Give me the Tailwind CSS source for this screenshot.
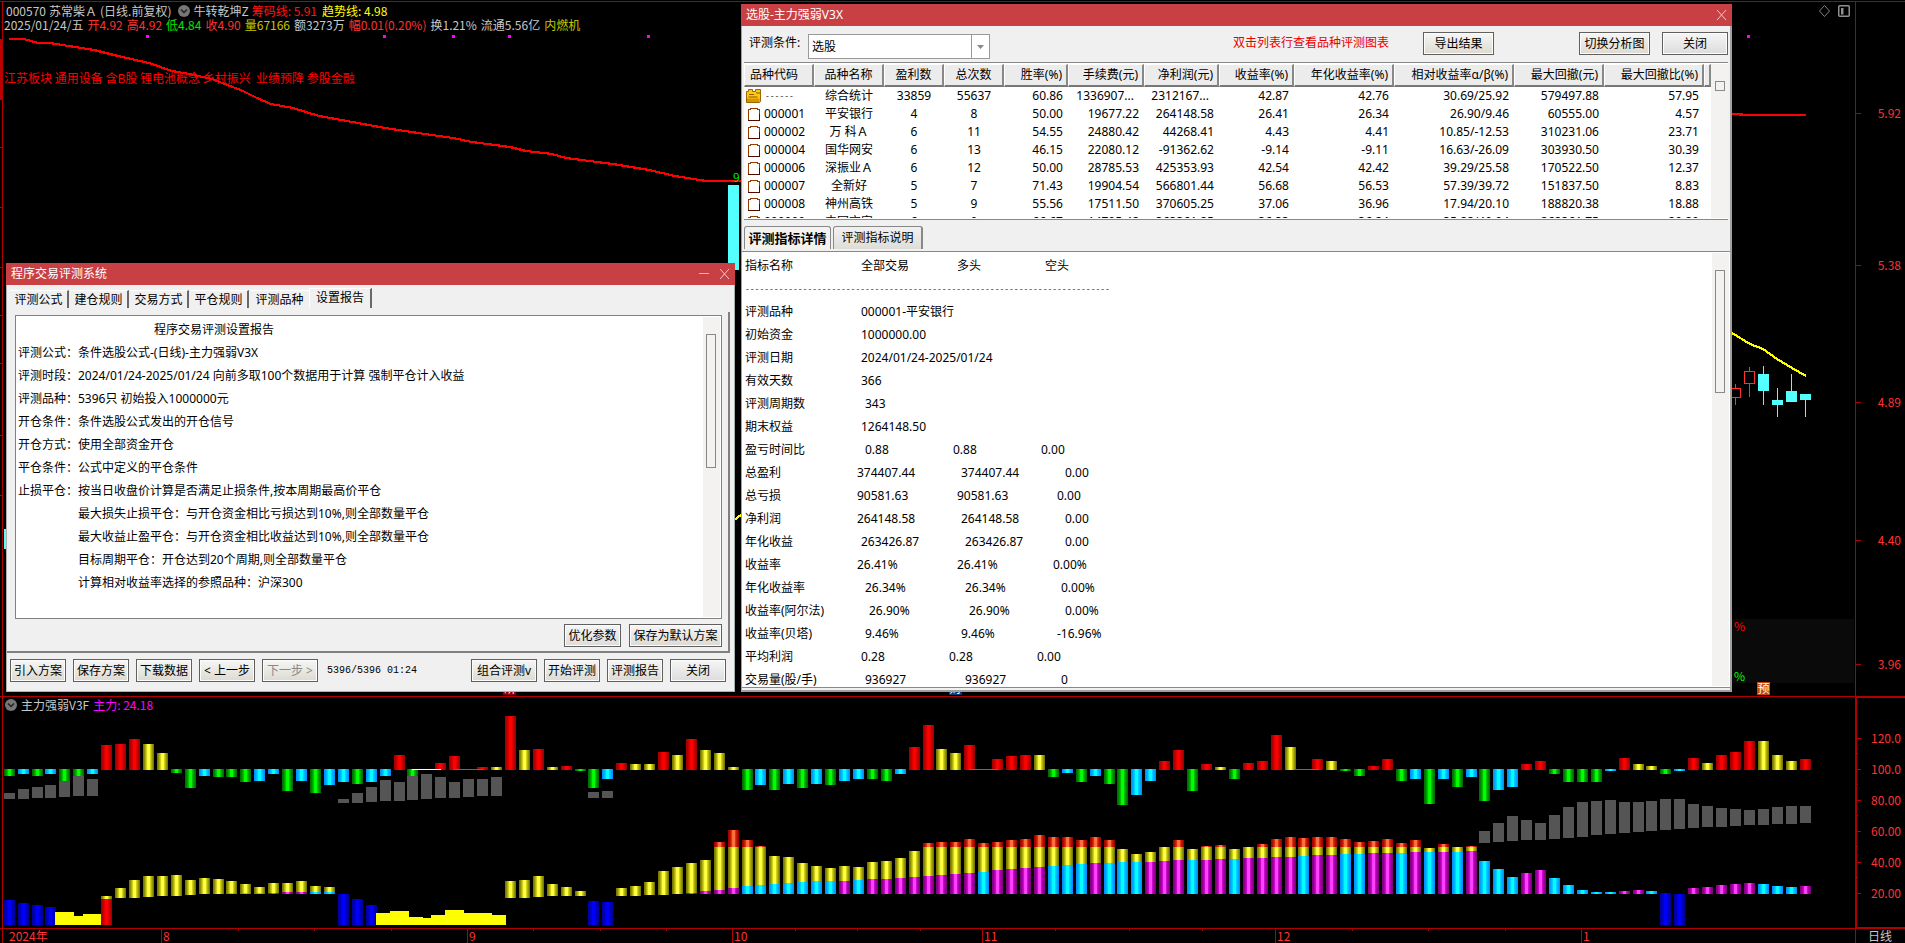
<!DOCTYPE html>
<html lang="zh-CN">
<head>
<meta charset="utf-8">
<title>主力强弱V3X 程序交易评测</title>
<script src="https://cdn.jsdelivr.net/npm/@tailwindcss/browser@4"></script>
</head>
<body class="bg-black text-[12px] leading-[14px] font-['Noto_Sans_CJK_SC',sans-serif] text-[#c8c8c8]">
<div class="relative flex h-screen flex-col overflow-hidden">

  <!-- price chart -->
  <section class="flex min-h-0 flex-1 border-t border-[#b00000] mt-px">
    <div class="relative min-w-0 flex-1">
      <svg id="price" class="block h-full w-full" viewBox="0 2 1855 694" preserveAspectRatio="none" shape-rendering="crispEdges"></svg>
      <div class="absolute left-[4px] top-[2px] flex flex-col whitespace-nowrap">
        <div class="flex items-center gap-[3px] pl-[2px]">
          <span>000570</span><span>苏常柴Ａ</span><span>(日线.前复权)</span>
          <svg class="ml-1 size-3" viewBox="0 0 12 12"><circle cx="6" cy="6" r="6" fill="#777"/><path d="M3 4.500l3 3 3-3" fill="none" stroke="#222" stroke-width="1.500"/></svg>
          <span>牛转乾坤Z</span><span class="text-[#ff1414]">筹码线: 5.91</span><span class="pl-[2px] text-[#ffff00]">趋势线: 4.98</span>
        </div>
        <div class="flex items-center gap-1">
          <span>2025/01/24/五</span><span class="text-[#ff3232]">开4.92</span><span class="text-[#ff3232]">高4.92</span><span class="text-[#00e600]">低4.84</span><span class="text-[#ff3232]">收4.90</span><span class="text-[#c8c800]">量67166</span><span>额3273万</span><span class="text-[#ff3232]">幅0.01(0.20%)</span><span>换1.21%</span><span>流通5.56亿</span><span class="text-[#c8c800]">内燃机</span>
        </div>
      </div>
      <p class="absolute left-[4px] top-[69px] whitespace-pre text-[#ff0000]">江苏板块 通用设备 含B股 锂电池概念 乡村振兴  业绩预降 参股金融</p>
      <div class="absolute right-[5px] top-[3px] flex items-center gap-2">
        <svg class="h-3 w-[11px]" viewBox="0 0 11 12" fill="none" stroke="#808080"><path d="M5.500.5l5 5.500-5 5.500-5-5.500z"/></svg>
        <svg class="size-3" viewBox="0 0 12 12"><rect x=".75" y=".75" width="10.500" height="10.500" rx="1" fill="none" stroke="#909090" stroke-width="1.500"/><rect x="3" y="3" width="2.500" height="6.500" fill="#909090"/></svg>
      </div>
      <span class="absolute left-[733px] top-[168px] text-[#00e600]">9</span>
      <div class="absolute bottom-[13px] left-[1732px] right-px flex h-16 flex-col justify-between bg-[#0a0a0a] px-[2px]">
        <span class="text-[#ff0000]">%</span><span class="text-[#00ff00]">%</span>
      </div>
      <span class="absolute bottom-px left-[1757px] h-[13px] w-[13px] bg-[#c04810] text-center leading-[12px] text-white">预</span>
      <span class="absolute bottom-px left-[503px] h-[13px] w-[13px] bg-[#8c0000] text-center leading-[12px] text-white">研</span>
      <span class="absolute bottom-px left-[949px] h-[13px] w-[13px] bg-[#003c78] text-center leading-[12px] text-white">财</span>
    </div>
    <div id="priceAxis" class="relative w-[50px] border-l border-[#b00000] text-[#ff3232]"></div>
  </section>

  <!-- strength indicator -->
  <section class="flex h-[232px] border-t border-[#b00000]">
    <div class="relative min-w-0 flex-1">
      <svg id="strength" class="block h-full w-full" viewBox="0 697 1855 231" preserveAspectRatio="none" shape-rendering="crispEdges"></svg>
      <div class="absolute left-[5px] top-px flex items-center gap-1 whitespace-nowrap">
        <svg class="size-3" viewBox="0 0 12 12"><circle cx="6" cy="6" r="6" fill="#777"/><path d="M3 4.500l3 3 3-3" fill="none" stroke="#222" stroke-width="1.500"/></svg>
        <span>主力强弱V3F</span><span class="text-[#ff00ff]">主力: 24.18</span>
      </div>
    </div>
    <div id="strengthAxis" class="relative w-[50px] border-b border-l-2 border-t border-[#b00000] text-[#ff3232]"></div>
  </section>

  <!-- time axis -->
  <footer class="flex h-[15px] border-t border-[#b00000]">
    <div id="timeAxis" class="relative min-w-0 flex-1 text-[#ff3232]"></div>
    <div class="w-[50px] border-l border-[#b00000] pl-3">日线</div>
  </footer>

  <!-- window: 程序交易评测系统 -->
  <div class="absolute bottom-[251px] left-[6px] top-[263px] flex w-[729px] flex-col bg-[#f0f0f0] font-['Noto_Sans','Noto_Sans_CJK_SC',sans-serif] text-black">
    <header class="flex h-[22px] shrink-0 items-center justify-between bg-[#c84044] pl-[5px] pr-[5px] text-white">
      <h2>程序交易评测系统</h2>
      <div class="flex items-center gap-[9px]">
        <button aria-label="最小化"><svg class="size-[11px]" viewBox="0 0 11 11" stroke="#e8b0b0"><path d="M0 4.500h10"/></svg></button>
        <button aria-label="关闭窗口"><svg class="size-[11px]" viewBox="0 0 11 11" stroke="#f0c8c8"><path d="M1 0l9 10M10 0L1 10"/></svg></button>
      </div>
    </header>
    <div class="flex min-h-0 flex-1 flex-col border border-t-0 border-[#a8b0b0]">
      <nav class="flex h-[23px] items-end pl-[3px]">
        <button class="mr-px h-[18px] w-[59px] border-r-2 border-t border-[#696969] border-t-white pt-px leading-[16px]">评测公式</button>
        <button class="mr-px h-[18px] w-[59px] border-r-2 border-t border-[#696969] border-t-white pt-px leading-[16px]">建仓规则</button>
        <button class="mr-px h-[18px] w-[59px] border-r-2 border-t border-[#696969] border-t-white pt-px leading-[16px]">交易方式</button>
        <button class="mr-px h-[18px] w-[59px] border-r-2 border-t border-[#696969] border-t-white pt-px leading-[16px]">平仓规则</button>
        <button class="h-[18px] w-[59px] border-t border-white pt-px leading-[16px]">评测品种</button>
        <button class="h-5 w-[63px] border-l border-r-2 border-t border-white border-r-[#696969] pb-[2px] leading-[16px]">设置报告</button>
      </nav>
      <div class="mr-[4px] mt-1 flex min-h-0 flex-1 flex-col border-b-2 border-r-2 border-[#808080] px-2 pb-1 pr-1.5 pt-[3px]">
        <div class="flex min-h-0 flex-1 border border-[#828282] bg-white">
          <div class="min-w-0 flex-1 overflow-hidden whitespace-nowrap pl-[2px] pt-[2px] leading-[23px]">
            <p class="pl-[136px]">程序交易评测设置报告</p>
            <p>评测公式：条件选股公式-(日线)-主力强弱V3X</p>
            <p>评测时段：2024/01/24-2025/01/24 向前多取100个数据用于计算 强制平仓计入收益</p>
            <p>评测品种：5396只 初始投入1000000元</p>
            <p>开仓条件：条件选股公式发出的开仓信号</p>
            <p>开仓方式：使用全部资金开仓</p>
            <p>平仓条件：公式中定义的平仓条件</p>
            <p>止损平仓：按当日收盘价计算是否满足止损条件,按本周期最高价平仓</p>
            <p class="pl-15">最大损失止损平仓：与开仓资金相比亏损达到10%,则全部数量平仓</p>
            <p class="pl-15">最大收益止盈平仓：与开仓资金相比收益达到10%,则全部数量平仓</p>
            <p class="pl-15">目标周期平仓：开仓达到20个周期,则全部数量平仓</p>
            <p class="pl-15">计算相对收益率选择的参照品种：沪深300</p>
          </div>
          <div class="m-px w-[17px] bg-[#f3f2f1] px-[3px] pt-[17px]"><div class="h-[134px] w-[10px] border border-[#888]"></div></div>
        </div>
        <div class="mt-[5px] flex justify-end gap-2">
          <button class="h-[23px] w-[57px] border border-[#606060] bg-linear-to-b from-[#f6f6f6] to-[#dcdcdc] shadow-[inset_0_0_0_1px_#fcfcfc]">优化参数</button>
          <button class="h-[23px] w-[93px] border border-[#606060] bg-linear-to-b from-[#f6f6f6] to-[#dcdad0] shadow-[inset_0_0_0_1px_#fcfcfc]">保存为默认方案</button>
        </div>
      </div>
      <div class="flex h-[38px] items-start gap-[7px] pl-[3px] pr-2 pt-[6px]">
        <button class="h-[23px] w-[56px] border border-[#606060] bg-linear-to-b from-[#f6f6f6] to-[#dcdad0] shadow-[inset_0_0_0_1px_#fcfcfc]">引入方案</button>
        <button class="h-[23px] w-[56px] border border-[#606060] bg-linear-to-b from-[#f6f6f6] to-[#dcdad0] shadow-[inset_0_0_0_1px_#fcfcfc]">保存方案</button>
        <button class="h-[23px] w-[56px] border border-[#606060] bg-linear-to-b from-[#f6f6f6] to-[#dcdad0] shadow-[inset_0_0_0_1px_#fcfcfc]">下载数据</button>
        <button class="h-[23px] w-[56px] border border-[#606060] bg-linear-to-b from-[#f6f6f6] to-[#dcdad0] shadow-[inset_0_0_0_1px_#fcfcfc]">&lt; 上一步</button>
        <button class="h-[23px] w-[56px] border border-[#606060] bg-linear-to-b from-[#f6f6f6] to-[#dcdad0] text-[#888] shadow-[inset_0_0_0_1px_#fcfcfc]" disabled>下一步 &gt;</button>
        <output class="mr-auto pl-[2px] font-['Liberation_Mono',monospace] text-[10px] leading-[23px]">5396/5396 01:24</output>
        <button class="h-[23px] w-[66px] border border-[#606060] bg-linear-to-b from-[#f6f6f6] to-[#dcdad0] shadow-[inset_0_0_0_1px_#fcfcfc]">组合评测v</button>
        <button class="h-[23px] w-[56px] border border-[#606060] bg-linear-to-b from-[#f6f6f6] to-[#dcdad0] shadow-[inset_0_0_0_1px_#fcfcfc]">开始评测</button>
        <button class="h-[23px] w-[56px] border border-[#606060] bg-linear-to-b from-[#f6f6f6] to-[#dcdad0] shadow-[inset_0_0_0_1px_#fcfcfc]">评测报告</button>
        <button class="h-[23px] w-[56px] border border-[#606060] bg-linear-to-b from-[#f6f6f6] to-[#dcdcdc] shadow-[inset_0_0_0_1px_#fcfcfc]">关闭</button>
      </div>
    </div>
  </div>

  <!-- window: 选股 -->
  <div class="absolute bottom-[251px] left-[741px] right-[173px] top-1 flex flex-col bg-[#f0f0f0] font-['Noto_Sans','Noto_Sans_CJK_SC',sans-serif] text-black">
    <header class="flex h-[22px] shrink-0 items-center justify-between bg-[#c84044] pl-[5px] pr-[5px] text-white">
      <h2>选股-主力强弱V3X</h2>
      <button aria-label="关闭窗口"><svg class="size-[11px]" viewBox="0 0 11 11" stroke="#f0c8c8"><path d="M1 0l9 10M10 0L1 10"/></svg></button>
    </header>
    <div class="flex min-h-0 flex-1 flex-col border-b-2 border-l border-r-2 border-[#a0a0a0]">
      <div class="flex h-9 shrink-0 items-start pl-[7px] pr-[2px] pt-1.5">
        <label for="cond" class="w-[59px] leading-[22px]">评测条件:</label>
        <div class="relative mt-[2px]">
          <select id="cond" class="block h-[25px] w-[182px] appearance-none border border-[#999] bg-white pl-[3px]"><option>选股</option></select>
          <span class="pointer-events-none absolute bottom-px right-px top-px flex w-[18px] items-center justify-center border-l border-[#999]"><svg class="h-1 w-[7px]" viewBox="0 0 7 4" fill="#888"><path d="M0 0h7L3.500 4z"/></svg></span>
        </div>
        <span class="ml-auto leading-[22px] text-[#e60000]">双击列表行查看品种评测图表</span>
        <button class="ml-[34px] h-[23px] w-[71px] border border-[#606060] bg-linear-to-b from-[#f6f6f6] to-[#dcdad0] shadow-[inset_0_0_0_1px_#fcfcfc]">导出结果</button>
        <button class="ml-[85px] h-[23px] w-[71px] border border-[#606060] bg-linear-to-b from-[#f6f6f6] to-[#dcdad0] shadow-[inset_0_0_0_1px_#fcfcfc]">切换分析图</button>
        <button class="ml-3 h-[23px] w-[66px] border border-[#606060] bg-linear-to-b from-[#f6f6f6] to-[#dcdcdc] shadow-[inset_0_0_0_1px_#fcfcfc]">关闭</button>
      </div>
      <div class="mx-[2px] flex h-[158px] shrink-0 border-y border-[#888] bg-white pt-px">
        <div class="min-w-0 flex-1 overflow-hidden pb-px">
          <div class="h-full overflow-hidden">
          <table class="w-full table-fixed border-separate border-spacing-0 whitespace-nowrap">
            <colgroup><col class="w-[70px]"><col class="w-[70px]"><col class="w-[60px]"><col class="w-[60px]"><col class="w-[64px]"><col class="w-[76px]"><col class="w-[75px]"><col class="w-[75px]"><col class="w-[100px]"><col class="w-[120px]"><col class="w-[90px]"><col class="w-[100px]"><col></colgroup>
            <thead><tr id="heads" class="h-[23px]"></tr></thead>
            <tbody id="rows"></tbody>
          </table>
          </div>
        </div>
        <div class="mb-px w-[17px] bg-[#f3f2f1] pl-1 pt-[17px]"><div class="size-[10px] border border-[#888]"></div></div>
      </div>
      <nav class="flex h-[31px] shrink-0 items-end gap-[2px] pb-[2px] pl-[2px]">
        <button class="h-[23px] w-[87px] rounded-t-[3px] border border-b-0 border-[#888] bg-[#f4f2ee] text-[13px] font-bold">评测指标详情</button>
        <button class="h-[23px] w-[90px] rounded-t-[3px] border border-b-0 border-r-2 border-[#888] bg-linear-to-b from-[#f2f1ef] to-[#dfddd8]">评测指标说明</button>
      </nav>
      <div class="mb-0.5 flex min-h-0 flex-1 border-y border-[#888] bg-white">
        <div class="min-w-0 flex-1 overflow-hidden pl-[3px] pt-[2px]">
          <table class="table-fixed w-[400px] whitespace-nowrap text-left leading-[23px]">
            <colgroup><col class="w-[112px]"><col class="w-[92px]"><col class="w-[88px]"><col></colgroup>
            <thead>
              <tr><th class="font-normal">指标名称</th><th class="pl-1 font-normal">全部交易</th><th class="pl-2 font-normal">多头</th><th class="pl-2 font-normal">空头</th></tr>
            </thead>
            <tbody>
              <tr><td colspan="4" class="h-[23px] font-['Liberation_Mono',monospace] text-[8px]">----------------------------------------------------------------------------</td></tr>
              <tr><td>评测品种</td><td colspan="3" class="pl-1">000001-平安银行</td></tr>
              <tr><td>初始资金</td><td colspan="3" class="pl-1">1000000.00</td></tr>
              <tr><td>评测日期</td><td colspan="3" class="pl-1">2024/01/24-2025/01/24</td></tr>
              <tr><td>有效天数</td><td colspan="3" class="pl-1">366</td></tr>
              <tr><td>评测周期数</td><td colspan="3" class="pl-2">343</td></tr>
              <tr><td>期末权益</td><td colspan="3" class="pl-1">1264148.50</td></tr>
              <tr><td>盈亏时间比</td><td class="pl-2">0.88</td><td class="pl-1">0.88</td><td class="pl-1">0.00</td></tr>
              <tr><td>总盈利</td><td>374407.44</td><td class="pl-3">374407.44</td><td class="pl-7">0.00</td></tr>
              <tr><td>总亏损</td><td>90581.63</td><td class="pl-2">90581.63</td><td class="pl-5">0.00</td></tr>
              <tr><td>净利润</td><td>264148.58</td><td class="pl-3">264148.58</td><td class="pl-7">0.00</td></tr>
              <tr><td>年化收益</td><td class="pl-1">263426.87</td><td class="pl-4">263426.87</td><td class="pl-7">0.00</td></tr>
              <tr><td>收益率</td><td>26.41%</td><td class="pl-2">26.41%</td><td class="pl-4">0.00%</td></tr>
              <tr><td>年化收益率</td><td class="pl-2">26.34%</td><td class="pl-4">26.34%</td><td class="pl-6">0.00%</td></tr>
              <tr><td>收益率(阿尔法)</td><td class="pl-3">26.90%</td><td class="pl-5">26.90%</td><td class="pl-7">0.00%</td></tr>
              <tr><td>收益率(贝塔)</td><td class="pl-2">9.46%</td><td class="pl-3">9.46%</td><td class="pl-5">-16.96%</td></tr>
              <tr><td>平均利润</td><td class="pl-1">0.28</td><td>0.28</td><td>0.00</td></tr>
              <tr><td>交易量(股/手)</td><td class="pl-2">936927</td><td class="pl-4">936927</td><td class="pl-6">0</td></tr>
            </tbody>
          </table>
        </div>
        <div class="my-px mr-px w-[17px] bg-[#f3f2f1] pl-[3px] pt-[17px]"><div class="h-[123px] w-[10px] border border-[#888]"></div></div>
      </div>
    </div>
  </div>
</div>

<script>
const RED = '#b00000';
const rect = (x, y, w, h, f) => `<rect x="${x}" y="${y}" width="${w}" height="${h}" fill="${f}"/>`;
const line = (pts, c) => `<polyline points="${pts}" fill="none" stroke="${c}" stroke-width="2.200" stroke-linejoin="round"/>`;

/* ---- price chart ---- */
let p = '';
p += rect(2, 2, 1, 694, RED) + rect(0, 39, 2, 61, '#c00000');
for (const y of [147, 207, 267, 315, 363, 435, 495]) p += rect(0, y, 2, 1, RED);
for (const x of [146, 383, 452, 508, 647, 1747]) p += rect(x, 35, 3, 3, '#ff00ff');
p += line('9,39 24,39 38,43 50,43 94,50 118,56 149,63 172,71 189,74 212,79 243,91 257,98 271,104 293,108 319,116 347,121 385,128 425,134 453,138 472,142 510,147 526,151 552,154 566,158 613,164 649,170 675,176 706,181 741,181', '#ff0000');
p += line('1732,114 1750,115 1806,115', '#ff0000');
p += line('734,520 741,515', '#ffff00');
p += line('1732,333 1750,344 1763,349 1777,359 1792,368 1806,376', '#ffff00');
p += rect(728, 185, 11, 85, '#54ffff') + rect(4, 529, 2, 20, '#54ffff');
for (const [x, t, b, hi, lo] of [[1758, 374, 391, 366, 405], [1772, 400, 405, 388, 417], [1786, 391, 402, 374, 402], [1800, 394, 400, 394, 417]])
  p += rect(x, t, 11, b - t, '#54ffff') + rect(x + 5, hi, 1, lo - hi, '#54ffff');
for (const [x, t, b, hi, lo] of [[1730, 388, 398, 384, 405], [1744, 371, 384, 367, 397]])
  p += rect(x + 5, hi, 1, lo - hi, '#ff3232') + `<rect x="${x + .5}" y="${t + .5}" width="10" height="${b - t - 1}" fill="#000" stroke="#ff3232"/>`;
document.getElementById('price').innerHTML = p;

document.getElementById('priceAxis').innerHTML = [[5.92, 113], [5.38, 265], [4.89, 402], [4.40, 540], [3.96, 664]].map(([v, y]) => {
  const top = ((y - 2) / 694 * 100).toFixed(3);
  return `<i class="absolute left-0 h-px w-[5px] bg-[#b00000]" style="top:${top}%"></i><span class="absolute right-1 -translate-y-1/2" style="top:${top}%">${v.toFixed(2)}</span>`;
}).join('');

/* ---- strength indicator ---- */
const stops = {
  r: ['#a00000', '#d80000', '#ff0000'], y: ['#787800', '#c8c814', '#ffff40'], g: ['#006e00', '#00b400', '#00ff00'],
  c: ['#0090ff', '#00c8ff', '#00ffff'], m: ['#800080', '#c000c0', '#ff40ff'], b: ['#0000a0', '#0000c8', '#0000ff'], o: ['#a00000', '#d02800', '#ff7040']
};
let s = '<defs>' + Object.entries(stops).map(([k, [a, b, c]]) =>
  `<linearGradient id="g${k}"><stop offset=".08" stop-color="${a}"/><stop offset=".3" stop-color="${b}"/><stop offset=".42" stop-color="${c}"/><stop offset=".6" stop-color="${c}"/><stop offset=".7" stop-color="${b}"/><stop offset=".95" stop-color="${a}"/></linearGradient>`).join('') + '</defs>';
const X = i => Math.floor(4.2 + i * 13.922);
const bar = (i, k, t, b) => rect(X(i), t, 11, b - t, `url(#g${k})`);
s += rect(2, 697, 1, 231, RED);

/* grey bands: [first index, top, bottom, top, bottom ...] */
const grey = [
  [0, 793,799, 789,799, 787,798, 785,798, 781,797, 776,796, 779,796],
  [24, 799,803, 793,803, 787,802, 780,801, 782,801, 776,800, 774,799, 777,798, 782,798, 779,797, 779,796, 777,796],
  [42, 792,798, 791,798],
  [106, 831,843, 823,842, 816,841, 820,840, 823,840, 815,839, 807,838, 802,837, 801,835, 800,834, 802,833, 802,832, 801,831, 799,830, 799,829, 804,828, 806,827, 808,827, 809,826, 810,825, 809,825, 807,824, 806,824, 806,823]
];
for (const [first, ...v] of grey) for (let j = 0; j < v.length; j += 2) s += rect(X(first + j / 2), v[j], 11, v[j + 1] - v[j], '#555');

/* oscillator around 100 */
const osc = 'g776 c774 g776 c774 g781 g776 c774 r745 r744 r739 y744 y753 g773 g788 c776 g777 g777 g782 c781 c774 g791 c781 g793 c785 c782 g784 c782 c776 r755 g776 - r763 r756 - r767 y767 r716 y750 r749 y767 r766 g771 g788 c779 r763 y764 y764 r752 y755 r739 y750 y753 y767 g790 c785 g790 c784 g788 c784 g785 c781 c779 g779 g781 c774 r747 r725 y749 y753 r745 - r759 r756 r755 y755 g777 c773 g782 c776 g784 g805 c795 c781 r761 r750 g791 r764 y767 g779 r763 r761 r735 y747 - r759 y761 g771 g776 r766 r759 g781 c779 g804 c779 g787 c777 g801 c790 c787 r764 r761 g774 g782 g782 g782 c771 r758 y764 y766 g774 c771 r758 y763 r755 r752 r741 y741 y755 y761 r759'.split(' ');
osc.forEach((o, i) => {
  if (o === '-') return;
  const v = +o.slice(1);
  s += v < 770 ? bar(i, o[0], v, 770) : bar(i, o[0], 769, v);
});
s += rect(412, 769, 29, 1, '#fff') + rect(454, 769, 29, 1, '#787800') + rect(969, 769, 29, 1, '#787800') + rect(1295, 769, 24, 1, '#787800');

/* lower columns: "index:kind,top,bottom" */
const low = '0:b900,925 1:b903,925 2:b905,925 3:b907,925 7:y896,899 7:r899,925 8:y888,898 9:y880,898 10:y876,897 11:y876,896 12:y875,896 13:y880,895 14:y878,894 15:y879,894 16:y881,893 16:c893,894 17:y884,893 17:c893,894 18:y887,893 18:c893,894 19:y883,893 19:m893,894 20:y883,892 20:m892,894 21:y881,892 21:m892,894 22:y886,892 22:c892,894 23:y887,892 23:c892,894 24:b894,925 25:b899,925 26:b905,925 36:y881,898 37:y880,898 38:y876,897 39:y884,896 40:y887,896 41:y891,896 42:b901,925 43:b902,925 44:y888,896 45:y886,896 46:y882,895 47:y871,895 48:y867,894 119:b893,925 120:b894,925';
for (const e of low.split(' ')) {
  const [i, d] = e.split(':'), [t, b] = d.slice(1).split(',');
  s += bar(+i, d[0], +t, +b);
}
/* stacked columns from index 49: top, split, kind */
const stack = '863,893m 860,891m 842,890m 830,888m 840,886c 846,885c 856,884c 857,883c 863,882c 866,881c 868,881c 866,881m 867,880c 862,879m 861,879m 858,878m 851,877m 843,876m 842,875m 842,874m 839,873m 843,872c 842,870m 840,869m 839,868m 835,867m 837,866c 837,865c 840,864c 837,863m 840,863c 849,862c 854,862c 852,862m 847,861m 840,860m 849,860c 846,860m 845,859m 849,859c 847,858m 844,858m 839,857m 837,857m 838,856c 837,855m 837,855m 839,854c 842,854c 841,853m 839,853m 843,853c 840,852m 848,852c 844,852m 847,852c 846,851m'.split(' ');
stack.forEach((e, j) => {
  const i = 49 + j, k = e.slice(-1), [t, m] = e.slice(0, -1).split(',').map(Number);
  if (t < 847) s += bar(i, 'o', t, 847);
  s += bar(i, 'y', Math.max(t, 847), m) + bar(i, k, m, 894);
});
'c861 c869 c877 m873 m870 c878 c885 c890 c892 c892 m891 m890 c891 - - m888 m887 m885 m884 m883 c884 c886 c887 m886'.split(' ').forEach((e, j) => { if (e !== '-') s += bar(106 + j, e[0], +e.slice(1), 894); });
for (const [a, b, t] of [[55, 74, 912], [74, 83, 916], [83, 102, 914], [376, 390, 913], [390, 409, 911], [409, 423, 917], [423, 431, 918], [431, 445, 915], [445, 464, 910], [464, 492, 913], [492, 506, 915]])
  s += rect(a, t, b - a, 925 - t, '#ffff00');
s += bar(7, 'r', 899, 925);
document.getElementById('strength').innerHTML = s;

let ax = '';
[['120.0', 738], ['100.0', 769], ['80.00', 800], ['60.00', 831], ['40.00', 862], ['20.00', 893]].forEach(([v, y], i) => {
  const top = ((y - 698) / 229 * 100).toFixed(3), mid = ((y + 15 - 698) / 229 * 100).toFixed(3);
  ax += `<i class="absolute left-0 h-px w-1 bg-[#b00000]" style="top:${top}%"></i><span class="absolute right-1 -translate-y-1/2" style="top:${top}%">${v}</span>`;
  if (i < 5) ax += `<i class="absolute left-0 h-px w-px bg-[#b00000]" style="top:${mid}%"></i>`;
});
document.getElementById('strengthAxis').innerHTML = ax;

const pct = x => (x / 1855 * 100).toFixed(3);
document.getElementById('timeAxis').innerHTML =
  `<i class="absolute left-[2px] h-full w-px bg-[#b00000]"></i><span class="absolute left-[9px]">2024年</span>` +
  [[161, 8], [467, 9], [732, 10], [982, 11], [1275, 12], [1581, 1]].map(([x, t]) => `<span class="absolute h-full border-l border-[#b00000] pl-px" style="left:${pct(x)}%">${t}</span>`).join('') +
  [238, 314, 391, 533, 600, 666, 795, 857, 920, 1055, 1129, 1202, 1352, 1428, 1505].map(x => `<i class="absolute h-[2px] w-px bg-[#b00000]" style="left:${pct(x)}%"></i>`).join('');

/* ---- result table ---- */
const heads = ['品种代码', '品种名称', '盈利数', '总次数', '胜率(%)', '手续费(元)', '净利润(元)', '收益率(%)', '年化收益率(%)', '相对收益率α/β(%)', '最大回撤(元)', '最大回撤比(%)', ''];
document.getElementById('heads').innerHTML = heads.map((h, i) =>
  `<th class="${i === 0 ? 'pl-[5px] text-left' : i < 4 ? 'text-center' : 'pr-1 text-right'} border-b-2 border-l border-r-2 border-t border-b-[#777] border-l-white border-r-[#888] border-t-white bg-[#ececec] py-0 font-normal">${h}</th>`).join('');
const data = `------|综合统计|33859|55637|60.86|1336907...|2312167...|42.87|42.76|30.69/25.92|579497.88|57.95
000001|平安银行|4|8|50.00|19677.22|264148.58|26.41|26.34|26.90/9.46|60555.00|4.57
000002|万 科Ａ|6|11|54.55|24880.42|44268.41|4.43|4.41|10.85/-12.53|310231.06|23.71
000004|国华网安|6|13|46.15|22080.12|-91362.62|-9.14|-9.11|16.63/-26.09|303930.50|30.39
000006|深振业Ａ|6|12|50.00|28785.53|425353.93|42.54|42.42|39.29/25.58|170522.50|12.37
000007|全新好|5|7|71.43|19904.54|566801.44|56.68|56.53|57.39/39.72|151837.50|8.83
000008|神州高铁|5|9|55.56|17511.50|370605.25|37.06|36.96|17.94/20.10|188820.38|18.88
000009|中国宝安|6|9|66.67|14705.48|363361.25|36.33|36.24|35.88/40.04|262361.75|20.29`.split('\n').map(r => r.split('|'));
const folder = `<svg class="h-[14px] w-[15px]" viewBox="0 0 15 14"><path d="M.5 2.500h2V.5h4v2h3V.5h5v12l-1 1H.5z" fill="#ffc814" stroke="#a06400"/><path d="M3 5.500h5M10 4h4M2.500 8h9" stroke="#8c5a00"/><path d="M1 9.500h12.500V13H1z" fill="#d29600"/></svg>`;
const doc = `<svg class="ml-[2px] h-[13px] w-3" viewBox="0 0 12 13" shape-rendering="crispEdges"><path d="M.5 12V1.500h2v-1h7v1h2V12" fill="#fff" stroke="#963c00"/><path d="M0 12.500h12M11.500 6v7" stroke="#500a00"/></svg>`;
document.getElementById('rows').innerHTML = data.map((r, n) => '<tr class="h-[18px]">' + r.map((v, i) =>
  i === 0 ? `<td class="p-0"><span class="flex items-center gap-1 pl-[2px]">${n ? doc : folder}<span class="${n ? '' : `font-['Liberation_Mono',monospace] text-[8px]`}">${v}</span></span></td>`
  : i < 4 ? `<td class="p-0 text-center">${v}</td>`
  : `<td class="${v.endsWith('...') ? 'pr-[10px]' : 'pr-[5px]'} py-0 text-right">${v}</td>`).join('') + '<td></td></tr>').join('');
</script>
</body>
</html>
